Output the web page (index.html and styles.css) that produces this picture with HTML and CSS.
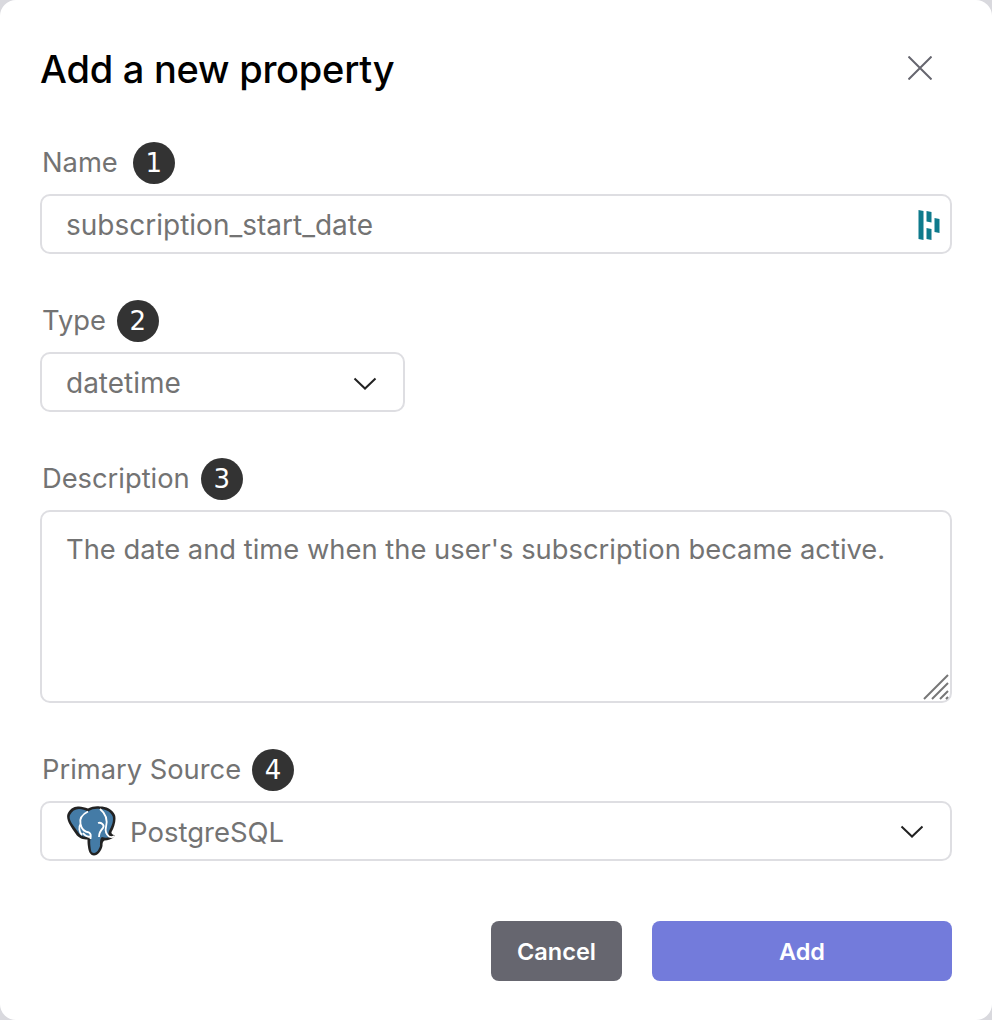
FILE: index.html
```html
<!DOCTYPE html>
<html lang="en">
<head>
    <meta charset="UTF-8">
    <meta name="viewport" content="width=device-width, initial-scale=1.0">
    <title>Add a new property</title>
    <link rel="stylesheet" href="styles.css">
</head>
<body>
    <div class="dialog">
        <div class="dialog-header">
            <h2 class="dialog-title">Add a new property</h2>
            <svg class="close-icon" width="24" height="24" viewBox="0 0 24 24" fill="none" stroke="#66666f" stroke-width="2">
                <path d="M0.5 0.5L23.5 23.5M23.5 0.5L0.5 23.5"/>
            </svg>
        </div>

        <div class="field">
            <div class="field-label field-label-first"><span class="label-text">Name</span> <span class="badge">1</span></div>
            <div class="control">
                <span class="control-text">subscription_start_date</span>
                <svg class="dashlane-icon" width="22" height="30" viewBox="0 0 22 30" fill="#0e7a8c">
                    <path d="M0.5 0L5.5 1V30L0.5 29Z"/>
                    <path d="M8.5 1L13.5 2V12.5L8.5 11.5Z"/>
                    <path d="M8.5 18L13.5 19V30L8.5 29Z"/>
                    <path d="M16.5 8L21.5 9V23L16.5 22Z"/>
                </svg>
            </div>
        </div>

        <div class="field">
            <div class="field-label"><span class="label-text">Type</span> <span class="badge">2</span></div>
            <div class="control control-short">
                <span class="control-text">datetime</span>
                <svg class="chevron" width="24" height="13" viewBox="0 0 24 13" fill="none" stroke="#222" stroke-width="2">
                    <path d="M1.5 1.5L12 11.5L22.5 1.5"/>
                </svg>
            </div>
        </div>

        <div class="field">
            <div class="field-label"><span class="label-text">Description</span> <span class="badge">3</span></div>
            <div class="control control-area">
                <span class="control-text">The date and time when the user's subscription became active.</span>
                <svg class="resize-grip" width="26" height="26" viewBox="0 0 26 26" fill="none" stroke="#777" stroke-width="2">
                    <path d="M1 25L25 1M9 25L25 9M17 25L25 17M23 25L25 23"/>
                </svg>
            </div>
        </div>

        <div class="field">
            <div class="field-label"><span class="label-text">Primary Source</span> <span class="badge">4</span></div>
            <div class="control control-source">
                <svg class="pg-icon" width="50" height="50" viewBox="0 0 50 50">
                    <path d="M0.5 8C2.5 3 7 0 12 0.5C15 0.5 18 1.5 21 2.5C25 0.5 29 0 33 0.5C39 0.5 45.5 3 48 9C49.5 14 47.5 21 44.5 26C44 28.5 46.5 28.5 48 30C44.5 33.5 41 34.5 37.5 34.5C35.5 35.5 35.5 37.5 35.5 40C34.5 44.5 31 49.5 27 49.5C23 49.5 21.5 45 21 41C20.5 38 20.5 35.5 20.5 33.5C16.5 33.5 11.5 32.5 8.5 27.5C4.5 21.5 -1.5 14 0.5 8Z" fill="#222"/>
                    <path d="M3 9C5 5 8 3 12 3C15 3 18 4 21 5.5C25 3 29 2.5 33 3C38 3 43 5 45.5 10C47 14 45 20 42 25C41 28 41 30 43 31C40 32 38 32 35 31C33 32 33 36 33 40C32 43 30 47 27 47C24 47 24 44 23.5 41C23 37 23 33 24 31C19 31 14 31 11 26C7 20 1 14 3 9Z" fill="#447ba6"/>
                    <path d="M21 5.5C16 8 12 12 13.5 18C14.5 23 18 26 22 26.5C24 27.5 24 29 23.5 33M13.5 18C11.5 21 12 26 15 29M16 27C18 30 21 31 24 31" fill="none" stroke="#fff" stroke-width="1.8"/>
                    <path d="M33 3C38 7 41 13 39 21C38 25 39 28 42 30.5C44 31.5 46 31 47.5 30M31 17C34 16 38 19 36 22C34 24 32 26 32 31" fill="none" stroke="#fff" stroke-width="1.8"/>
                </svg>
                <span class="control-text">PostgreSQL</span>
                <svg class="chevron" width="24" height="13" viewBox="0 0 24 13" fill="none" stroke="#222" stroke-width="2">
                    <path d="M1.5 1.5L12 11.5L22.5 1.5"/>
                </svg>
            </div>
        </div>

        <div class="dialog-footer">
            <button class="btn btn-cancel">Cancel</button>
            <button class="btn btn-add">Add</button>
        </div>
    </div>
</body>
</html>
```

FILE: styles.css
```css
html, body { margin: 0; padding: 0; height: 100%; background: #d9d9de; }
body { font-family: Inter, "Noto Sans", sans-serif; }
.dialog { box-sizing: border-box; width: 992px; height: 1020px; background: #fff; border-radius: 16px; padding: 40px 40px 0; overflow: hidden; }
.dialog-header { display: flex; justify-content: space-between; align-items: center; height: 58px; margin-bottom: 44px; }
.dialog-title { margin: 0; font-size: 38px; font-weight: 500; letter-spacing: -0.25px; color: #000; }
.close-icon { margin: 0 20px 3px 0; }
.field { margin-bottom: 46px; }
.field-label { display: flex; align-items: center; gap: 11px; height: 42px; margin-bottom: 10px; padding-left: 2px; font-size: 27.3px; color: #737373; }
.field-label-first { gap: 15px; }
.label-text { margin-top: -2px; }
.badge { display: flex; align-items: center; justify-content: center; width: 42px; height: 42px; border-radius: 50%; background: #333; color: #fff; font-family: "DejaVu Sans", sans-serif; font-size: 26px; }
.control { box-sizing: border-box; display: flex; align-items: center; justify-content: space-between; width: 912px; height: 60px; padding: 2px 24px 0; border: 2px solid #dedee2; border-radius: 10px; font-size: 28px; color: #737373; background: #fff; }
.control-short { width: 365px; padding-right: 26px; }
.control-area { position: relative; height: 193px; align-items: flex-start; padding-top: 21px; font-size: 27.35px; }
.control-source { padding: 0 26px 0 25px; font-size: 27.5px; }
.control-source .control-text { flex: 1; margin-left: 13px; padding-top: 2px; }
.dashlane-icon { margin-right: -14px; margin-top: -1px; }
.resize-grip { position: absolute; right: 1px; bottom: 1px; }
.chevron { flex: none; }
.dialog-footer { display: flex; justify-content: flex-end; gap: 30px; margin-top: 60px; }
.btn { height: 60px; border: 0; border-radius: 8px; color: #fff; font-family: inherit; font-size: 23.5px; font-weight: 600; }
.btn-cancel { width: 131px; background: #66666f; }
.btn-add { width: 300px; background: #737bdb; }
```
